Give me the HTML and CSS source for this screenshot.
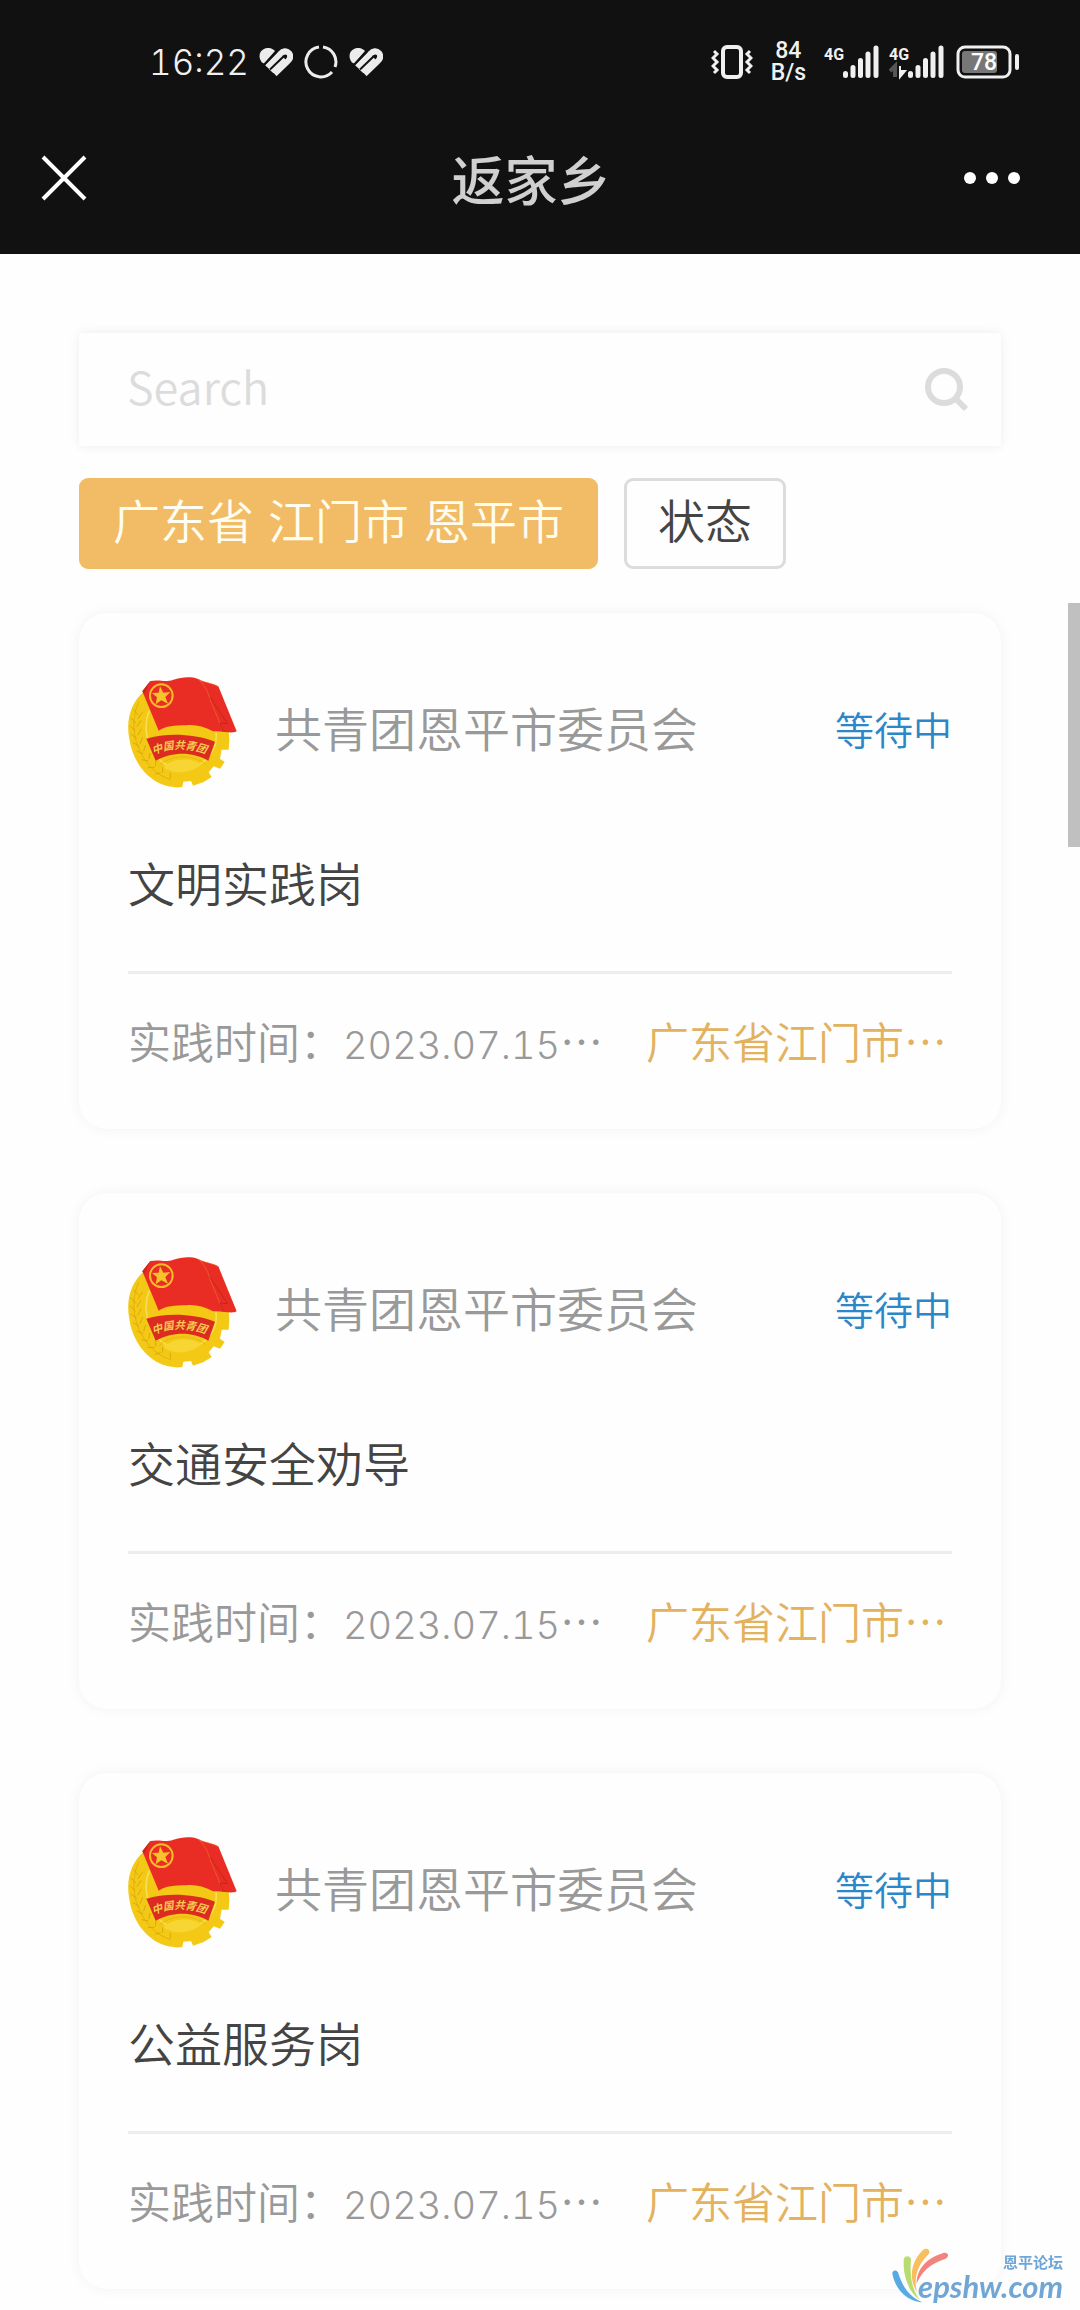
FILE: index.html
```html
<!DOCTYPE html>
<html lang="zh-CN">
<head>
<meta charset="utf-8">
<meta name="viewport" content="width=device-width, initial-scale=1">
<title>返家乡</title>
<link rel="stylesheet" href="styles.css">
</head>
<body>
<svg class="defs" aria-hidden="true">
  <defs>
    <symbol id="heart" viewBox="0 0 34 28">
      <path fill="#ececec" d="M3 14.500C-1 10 0 3 5 1C9 -1 13 0 16 3L5 15.500Z"/>
      <path d="M8 19L21 6Q26 1 30 5Q33 9 29 13L15.500 26M12 23L25 10" fill="none" stroke="#ececec" stroke-width="6"/>
      <path d="M5 17L18 3.500M11 21.500L24.500 8.500" fill="none" stroke="#111" stroke-width="2"/>
    </symbol>
    <symbol id="signal" viewBox="0 0 55 40">
      <text x="0" y="18" class="signal-label">4G</text>
      <path d="M21.500 31.500V33.500M29 25.500V33.500M36.500 18.500V33.500M44 12V33.500M52 6V33.500" stroke="#f0f0f0" stroke-width="5" stroke-linecap="round"/>
    </symbol>
    <symbol id="emblem" viewBox="54 50 336 336">
      <path fill="#f3c915" d="M100 95C65 125 48 175 57 230C66 300 105 350 155 372C175 380 200 383 217 380L220 364L243 362L249 376L281 365L305 350L296 336L311 318L330 325L344 305L330 295L335 268H356L358 238C358 220 355 205 350 190Z"/>
      <path d="M86 125C60 185 70 255 112 308C130 331 153 350 184 358" fill="none" stroke="#e1b20d" stroke-width="3"/>
      <path d="M70 148l16 17M62 172l16 17M59 196l17 16M62 221l19 13M69 247l19 11M80 272l20 8M95 298l20 4M113 322l20-1M134 342l18-5M98 155l-14 20M93 180l-13 20M94 205l-11 20M98 230l-8 20M107 254l-6 19M120 278l-4 18M138 301l-2 17M158 320l0 17M180 337l2 16" stroke="#dba90c" stroke-width="3" fill="none"/>
      <path d="M118 150C92 214 120 305 199 325C270 335 326 280 318 214" fill="none" stroke="#f8de53" stroke-width="5"/>
      <path d="M160 320C190 345 245 340 274 312C250 291 185 292 160 320Z" fill="#f7d533"/>
      <path d="M148 316C180 282 250 281 286 312" fill="none" stroke="#ddaf17" stroke-width="2"/>
      <path fill="#e92d24" d="M97 93L121 62C153 56 163 68 190 58C214 50 243 48 262 55C286 68 305 66 325 78L380 213C365 222 335 210 309 213C280 198 255 192 229 195C194 195 168 197 146 211Z"/>
      <path d="M266 57C292 84 294 99 301 119L340 214M325 80C303 66 284 69 266 57" fill="none" stroke="#f06a2f" stroke-width="2"/>
      <path d="M300 111L353 190L330 188L340 214" fill="none" stroke="#bf281b" stroke-width="3"/>
      <path fill="#c62918" d="M97 93L121 62C110 82 110 87 103 101Z"/>
      <circle cx="154" cy="106" r="34" fill="none" stroke="#f6bd27" stroke-width="6"/>
      <path fill="#f6c32b" d="M150 78L160 97L181 95L166 110L174 130L154 120L137 132L141 111L126 98L146 97Z"/>
      <path fill="#dc2b20" d="M109 235C167 218 248 219 315 244L295 301C242 270 184 276 137 301Z"/>
      <path id="emblem-arc" fill="none" d="M131 283C181 258 247 262 300 286"/>
      <text class="emblem-text"><textPath href="#emblem-arc">中国共青团</textPath></text>
    </symbol>
  </defs>
</svg>

<header class="top">
  <div class="status">
    <time class="clock">16:22</time>
    <div class="notices">
      <svg width="34" height="28" aria-hidden="true"><use href="#heart"/></svg>
      <svg width="34" height="34" viewBox="0 0 34 34" aria-hidden="true"><path d="M19 2A15 15 0 0 1 31 22M28 27A15 15 0 1 1 15 2" fill="none" stroke="#ececec" stroke-width="3"/></svg>
      <svg width="34" height="28" aria-hidden="true"><use href="#heart"/></svg>
    </div>
    <div class="indicators">
      <svg width="42" height="36" viewBox="0 0 42 36" aria-hidden="true"><rect x="12" y="3" width="18" height="30" rx="4" fill="none" stroke="#f0f0f0" stroke-width="4"/><path d="M3 7L6 10L2 14L6 18L2 22L6 26L3 29M39 7L36 10L40 14L36 18L40 22L36 26L39 29" fill="none" stroke="#f0f0f0" stroke-width="3"/></svg>
      <div class="speed">84<br>B/s</div>
      <div class="signals">
        <svg width="55" height="40" aria-hidden="true"><use href="#signal"/></svg>
        <svg width="55" height="40" viewBox="0 0 55 40" aria-hidden="true"><use href="#signal"/><path d="M6 35V24L1 29" fill="none" stroke="#555" stroke-width="4"/><path d="M11 24V35L16 29H12" fill="#f0f0f0" stroke="#f0f0f0" stroke-width="2"/></svg>
      </div>
      <svg width="64" height="36" viewBox="0 0 64 36" aria-hidden="true"><rect x="2" y="3" width="52" height="30" rx="7" fill="none" stroke="#f0f0f0" stroke-width="3"/><rect x="6" y="7" width="35" height="22" rx="3" fill="#777"/><path d="M61 12V24" stroke="#f0f0f0" stroke-width="4" stroke-linecap="round"/><text x="28" y="26" class="battery-text">78</text></svg>
    </div>
  </div>
  <nav class="nav">
    <button class="icon-button" type="button" aria-label="关闭"><svg width="46" height="46" viewBox="0 0 46 46"><path d="M2 2L44 44M44 2L2 44" stroke="#fff" stroke-width="4"/></svg></button>
    <h1 class="nav-title">返家乡</h1>
    <button class="icon-button icon-button-end" type="button" aria-label="更多"><svg width="58" height="46" viewBox="0 0 58 46"><g fill="#fff"><circle cx="7" cy="23" r="6"/><circle cx="29" cy="23" r="6"/><circle cx="51" cy="23" r="6"/></g></svg></button>
  </nav>
</header>

<main class="content">
  <form class="search" role="search">
    <input class="search-input" type="text" placeholder="Search" aria-label="搜索">
    <button class="icon-button" type="button" aria-label="搜索"><svg width="46" height="46" viewBox="0 0 46 46"><circle cx="20" cy="20" r="16" fill="none" stroke="#dcdcdc" stroke-width="6"/><path d="M31 31L42 42" stroke="#dcdcdc" stroke-width="6"/></svg></button>
  </form>

  <div class="filters">
    <button class="filter filter-active" type="button"><span>广东省</span> <span>江门市</span> <span>恩平市</span></button>
    <button class="filter" type="button">状态</button>
  </div>

  <div class="cards">
    <article class="card">
      <div class="card-head"><svg class="emblem" aria-hidden="true"><use href="#emblem"/></svg><span class="org">共青团恩平市委员会</span><span class="state">等待中</span></div>
      <h2 class="card-title">文明实践岗</h2>
      <div class="card-foot"><span class="period">实践时间：<time class="date">2023.07.15</time>⋯</span><span class="place">广东省江门市⋯</span></div>
    </article>
    <article class="card">
      <div class="card-head"><svg class="emblem" aria-hidden="true"><use href="#emblem"/></svg><span class="org">共青团恩平市委员会</span><span class="state">等待中</span></div>
      <h2 class="card-title">交通安全劝导</h2>
      <div class="card-foot"><span class="period">实践时间：<time class="date">2023.07.15</time>⋯</span><span class="place">广东省江门市⋯</span></div>
    </article>
    <article class="card">
      <div class="card-head"><svg class="emblem" aria-hidden="true"><use href="#emblem"/></svg><span class="org">共青团恩平市委员会</span><span class="state">等待中</span></div>
      <h2 class="card-title">公益服务岗</h2>
      <div class="card-foot"><span class="period">实践时间：<time class="date">2023.07.15</time>⋯</span><span class="place">广东省江门市⋯</span></div>
    </article>
  </div>
</main>

<div class="scroll-thumb"></div>
<div class="watermark">
  <svg class="watermark-logo" width="60" height="58" viewBox="0 0 180 174" aria-hidden="true">
    <path fill="#57abe2" d="M4 83C3 73 15 69 21 79C34 121 54 153 94 169C49 166 14 132 4 83Z"/>
    <path fill="#b9dc72" d="M38 42C39 28 57 27 60 39C56 83 61 130 87 163C51 137 36 89 38 42Z"/>
    <path fill="#f8bf61" d="M96 12C106 2 121 12 113 24C76 61 68 99 78 137C53 100 58 48 96 12Z"/>
    <path fill="#f2837f" d="M155 22C170 16 178 31 164 38C119 52 91 77 77 113C77 67 109 36 155 22Z"/>
  </svg>
  <div class="watermark-text"><span class="watermark-cn">恩平论坛</span><span class="watermark-url">epshw.com</span></div>
</div>
</body>
</html>
```
FILE: styles.css
```css
* {
  box-sizing: border-box;
}

body {
  margin: 0;
  background: #fefefe;
  color: #444;
  font-family: "Noto Sans CJK SC", sans-serif;
  font-weight: 350;
}

button {
  border: 0;
  padding: 0;
  background: none;
  color: inherit;
  font: inherit;
}

svg {
  display: block;
  flex: none;
}

.defs {
  position: absolute;
  width: 0;
  height: 0;
}

.top {
  background: #111;
  color: #f0f0f0;
}

.status {
  display: flex;
  align-items: center;
  height: 124px;
  padding: 0 60px 0 149px;
}

.clock {
  font: 300 35px/40px Inter, sans-serif;
  font-variant-numeric: tabular-nums;
}

.notices {
  display: flex;
  align-items: center;
  gap: 11px;
  margin-left: 10px;
}

.indicators {
  display: flex;
  align-items: center;
  gap: 18px;
  margin-left: auto;
}

.speed {
  font: 500 23px/22px Roboto, sans-serif;
  text-align: center;
}

.signals {
  display: flex;
  gap: 10px;
}

.signals + svg {
  margin-left: -6px;
}

.signal-label {
  fill: #f0f0f0;
  font: 700 16px Roboto, sans-serif;
}

.battery-text {
  fill: #fff;
  font: 500 23px Roboto, sans-serif;
  text-anchor: middle;
}

.nav {
  display: grid;
  grid-template-columns: 1fr auto 1fr;
  align-items: center;
  height: 130px;
  padding: 0 59px 22px 41px;
}

.nav-title {
  margin: 0;
  color: #d0d0d0;
  font-size: 53px;
  font-weight: 500;
  line-height: 64px;
}

.icon-button {
  justify-self: start;
}

.icon-button-end {
  justify-self: end;
}

.content {
  padding: 79px 79px 20px;
}

.search {
  display: flex;
  align-items: center;
  height: 113px;
  padding: 0 31px 0 48px;
  border-radius: 4px;
  background: #fefefe;
  box-shadow: 0 0 12px rgba(0, 0, 0, 0.07);
}

.search-input {
  flex: 1;
  min-width: 0;
  padding: 0 0 8px;
  border: 0;
  outline: 0;
  background: none;
  color: #444;
  font: inherit;
  font-size: 45px;
}

.search-input::placeholder {
  color: #dcdcdc;
  opacity: 1;
}

.filters {
  display: flex;
  gap: 26px;
  margin-top: 32px;
}

.filter {
  display: flex;
  align-items: center;
  gap: 14px;
  height: 91px;
  padding: 0 31px 10px;
  border: 3px solid #dcdcdc;
  border-radius: 9px;
  font-size: 47px;
}

.filter-active {
  border-color: #f2bb66;
  background: #f2bb66;
  color: #fffdf0;
}

.cards {
  display: flex;
  flex-direction: column;
  gap: 64px;
  margin-top: 44px;
}

.card {
  padding: 64px 49px 59px;
  border-radius: 28px;
  background: #fefefe;
  box-shadow: 0 0 14px rgba(0, 0, 0, 0.05);
}

.card-head {
  display: flex;
  align-items: center;
}

.emblem {
  width: 112px;
  height: 112px;
}

.emblem-text {
  fill: #f8c94e;
  font-size: 32px;
  font-style: italic;
  font-weight: 700;
}

.org {
  margin-left: 35px;
  padding-bottom: 12px;
  color: #999;
  font-size: 47px;
  line-height: 64px;
}

.state {
  margin-left: auto;
  padding-bottom: 10px;
  color: #2b87c8;
  font-size: 39px;
  line-height: 64px;
}

.card-title {
  margin: 61px 0 0;
  padding-bottom: 57px;
  border-bottom: 3px solid #ededed;
  font-size: 47px;
  font-weight: inherit;
  line-height: 64px;
}

.card-foot {
  display: flex;
  gap: 43px;
  padding-top: 36px;
  color: #999;
  font-size: 43px;
  line-height: 60px;
  white-space: nowrap;
}

.date {
  font-family: Inter, sans-serif;
  font-size: 38px;
  font-weight: 300;
  font-variant-numeric: tabular-nums;
  line-height: 40px;
}

.place {
  color: #e3b25f;
}

.scroll-thumb {
  position: absolute;
  top: 603px;
  right: 0;
  width: 12px;
  height: 244px;
  background: #c0c0c0;
}

.watermark {
  position: fixed;
  right: 17px;
  bottom: 6px;
  display: flex;
}

.watermark-logo {
  margin-right: -33px;
}

.watermark-text {
  display: flex;
  flex-direction: column;
  align-items: flex-end;
  padding-top: 7px;
  color: #6fa6d6;
}

.watermark-cn {
  font-size: 15px;
  font-weight: 700;
  line-height: 18px;
}

.watermark-url {
  font: italic 700 31px/30px Lato, sans-serif;
}
```
